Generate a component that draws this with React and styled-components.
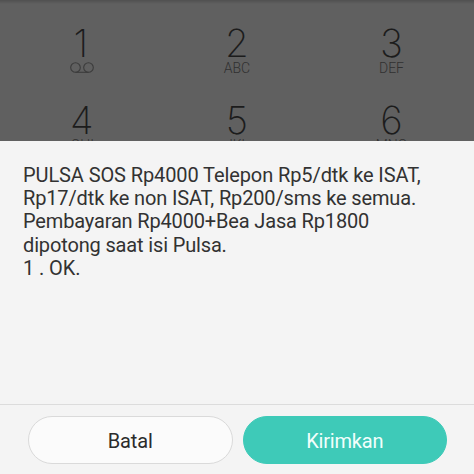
import React from "react";
import styled, { createGlobalStyle } from "styled-components";

const GlobalStyle = createGlobalStyle`
  body { margin: 0; background: #f4f4f4; }
  * { box-sizing: border-box; }
`;

const Screen = styled.main`
  width: 474px;
  height: 474px;
  display: flex;
  flex-direction: column;
  overflow: hidden;
  background: #f4f4f4;
  color: #323232;
  font-family: Roboto, sans-serif;
`;

const Keypad = styled.section`
  flex: 0 0 141px;
  padding: 24px 5px 0 5px;
  display: grid;
  grid-template-columns: repeat(3, 154.6px);
  grid-auto-rows: 77px;
  overflow: hidden;
  background: linear-gradient(#505050, #606060 4px);
`;

const Key = styled.div`
  display: flex;
  flex-direction: column;
  align-items: center;
`;

const Digit = styled.span`
  height: 38px;
  line-height: 39px;
  padding-right: ${(p) => p.$inset || 0}px;
  font-family: Inter, sans-serif;
  font-size: 38.5px;
  font-weight: 250;
  color: #1c1c1c;
`;

const Letters = styled.span`
  height: 13px;
  line-height: 13px;
  font-size: 14px;
  font-weight: 300;
  color: #303030;
`;

const Voicemail = styled.svg`
  width: 24px;
  height: 13px;
  fill: none;
  stroke: #3b3b3b;
  stroke-width: 1.1;
`;

const Message = styled.p`
  flex: 1;
  margin: 0;
  padding: 23px 0 0 23px;
  font-size: 20px;
  line-height: 23.2px;
  white-space: pre;
`;

const Line = styled.span`
  display: block;
  letter-spacing: ${(p) => p.$spacing}px;
`;

const Actions = styled.footer`
  height: 70px;
  display: flex;
  gap: 10px;
  padding: 11px 27px 0 28px;
  border-top: 1px solid #dcdcdc;
`;

const Button = styled.button`
  flex: 1;
  height: 48px;
  padding: 2px 0 0;
  border: 1px solid ${(p) => (p.$primary ? "#3ecab8" : "#dadada")};
  border-radius: 24px;
  background: ${(p) => (p.$primary ? "#3ecab8" : "#fbfbfb")};
  color: ${(p) => (p.$primary ? "#f2fffc" : "#2b2b2b")};
  font: 400 20px Roboto, sans-serif;
  letter-spacing: ${(p) => (p.$primary ? -0.2 : -0.1)}px;
`;

const keys = [
  ["1", null, 3], ["2", "ABC"], ["3", "DEF"],
  ["4", "GHI", 1], ["5", "JKL"], ["6", "MNO"],
];

const lines = [
  ["PULSA SOS Rp4000 Telepon Rp5/dtk ke ISAT,", -0.1],
  ["Rp17/dtk ke non ISAT, Rp200/sms ke semua.", -0.14],
  ["Pembayaran Rp4000+Bea Jasa Rp1800", -0.16],
  ["dipotong saat isi Pulsa.", -0.15],
  ["1 . OK.", -0.1],
];

export default function App() {
  return (
    <Screen>
      <GlobalStyle />
      <Keypad>
        {keys.map(([digit, letters, inset]) => (
          <Key key={digit}>
            <Digit $inset={inset}>{digit}</Digit>
            {letters ? <Letters>{letters}</Letters> : (
              <Voicemail viewBox="0 0 24 13" aria-label="Voicemail">
                <circle cx="5.5" cy="5.5" r="4.8" />
                <circle cx="18.5" cy="5.5" r="4.8" />
                <path d="M5.5 10.3h13" />
              </Voicemail>
            )}
          </Key>
        ))}
      </Keypad>
      <Message>
        {lines.map(([text, spacing]) => <Line key={text} $spacing={spacing}>{text}</Line>)}
      </Message>
      <Actions>
        <Button>Batal</Button>
        <Button $primary>Kirimkan</Button>
      </Actions>
    </Screen>
  );
}
